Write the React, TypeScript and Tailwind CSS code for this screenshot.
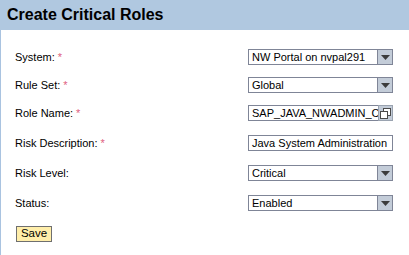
const font = { fontFamily: '"Liberation Sans", Arial, sans-serif' };

interface Field {
  label: string;
  required: boolean;
  value: string;
  kind: "select" | "lookup" | "text";
  top: string;
}

const fields: Field[] = [
  { label: "System:", required: true, value: "NW Portal on nvpal291", kind: "select", top: "mt-0" },
  { label: "Rule Set:", required: true, value: "Global", kind: "select", top: "mt-[12px]" },
  { label: "Role Name:", required: true, value: "SAP_JAVA_NWADMIN_CRIT", kind: "lookup", top: "mt-[12px]" },
  { label: "Risk Description:", required: true, value: "Java System Administration", kind: "text", top: "mt-[14px]" },
  { label: "Risk Level:", required: false, value: "Critical", kind: "select", top: "mt-[14px]" },
  { label: "Status:", required: false, value: "Enabled", kind: "select", top: "mt-[14px]" },
];

function Control({ field }: { field: Field }) {
  if (field.kind === "text") {
    return (
      <div className="w-[145px] h-[16px] border border-[#7f8597] bg-white flex items-center px-[3px] overflow-hidden whitespace-nowrap text-[11px] text-black">
        {field.value}
      </div>
    );
  }
  if (field.kind === "lookup") {
    return (
      <div className="w-[145px] h-[16px] flex">
        <div className="flex-1 border border-[#7f8597] border-r-0 bg-white flex items-center pl-[3px] overflow-hidden whitespace-nowrap text-[11px] text-black">
          {field.value}
        </div>
        <div className="w-[15px] h-[16px] bg-[#c3ccd8] border border-[#9aa3b0] flex items-center justify-center">
          <svg width="11" height="11" viewBox="0 0 11 11">
            <rect x="3.5" y="0.5" width="7" height="7" fill="#fff" stroke="#4a4a4a" />
            <rect x="0.5" y="3.5" width="7" height="7" fill="#fff" stroke="#4a4a4a" />
          </svg>
        </div>
      </div>
    );
  }
  return (
    <div className="w-[145px] h-[16px] flex border border-[#7f8597] bg-white">
      <div className="flex-1 flex items-center pl-[3px] overflow-hidden whitespace-nowrap text-[11px] text-black">
        {field.value}
      </div>
      <div className="w-[15px] bg-[#c3ccd8] border-l border-[#7f8597] flex items-center justify-center">
        <svg width="9" height="5" viewBox="0 0 9 5">
          <path d="M0 0h9L4.5 5z" fill="#3c3c3c" />
        </svg>
      </div>
    </div>
  );
}

export default function App() {
  return (
    <div className="w-[409px] h-[255px] bg-white overflow-hidden" style={font}>
      <div className="h-[30px] bg-[#b0c8e0] flex items-center pl-[7px]">
        <h1 className="text-[16px] font-bold text-black">Create Critical Roles</h1>
      </div>
      <div className="h-[225px] border-l border-[#a9c3e0] pl-[14px] pt-[19px]">
        <div className="flex flex-col">
          {fields.map((f) => (
            <div key={f.label} className={`flex items-center h-[16px] ${f.top}`}>
              <div className="w-[233px] text-[11px] text-black">
                {f.label}
                {f.required && <span className="text-[#e0607e] ml-[3px]">*</span>}
              </div>
              <Control field={f} />
            </div>
          ))}
        </div>
        <button className="mt-[15px] ml-[1px] w-[36px] h-[16px] bg-[#ffeeaa] border border-[#6f6f6f] text-[11.5px] text-black leading-none flex items-center justify-center">
          Save
        </button>
      </div>
    </div>
  );
}
